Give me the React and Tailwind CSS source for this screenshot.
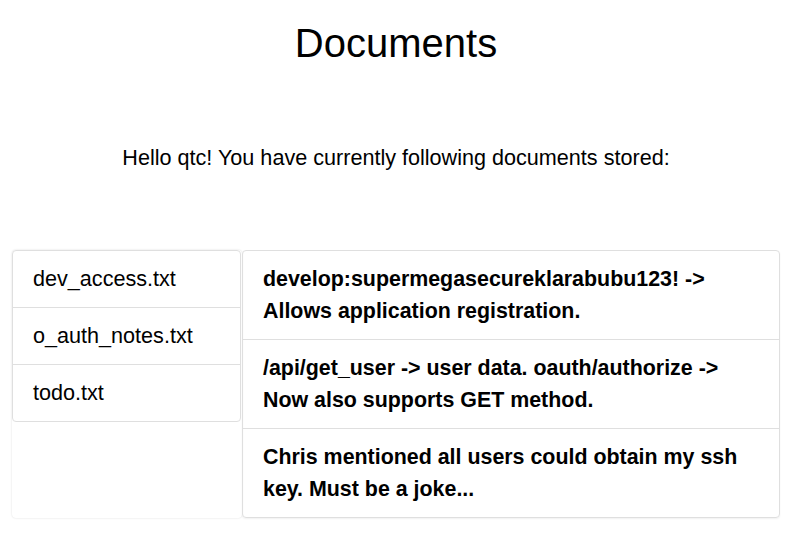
const files = ["dev_access.txt", "o_auth_notes.txt", "todo.txt"];

const notes = [
  "develop:supermegasecureklarabubu123! -> Allows application registration.",
  "/api/get_user -> user data. oauth/authorize -> Now also supports GET method.",
  "Chris mentioned all users could obtain my ssh key. Must be a joke...",
];

export default function App() {
  return (
    <div className="min-h-[560px] bg-white text-black font-['Liberation_Sans',Arial,sans-serif]">
      <div className="ml-3 mr-6 pt-[19px]">
        <h1 className="text-center text-[40px] leading-[48px] font-normal">Documents</h1>
        <p className="mt-[75px] text-center text-[21.6px] leading-[32px]">
          Hello qtc! You have currently following documents stored:
        </p>

        <div className="mt-[76px] flex items-stretch">
          <div className="w-[230px] shrink-0 rounded-[4px] bg-white shadow-[0_0_2px_rgba(0,0,0,0.15)]">
            <ul className="mr-px rounded-[4px] border border-[#dfdfdf]">
              {files.map((f, i) => (
                <li
                  key={f}
                  className={
                    "px-5 py-3 text-[21.6px] leading-[32px] " +
                    (i > 0 ? "border-t border-[#dfdfdf]" : "")
                  }
                >
                  {f}
                </li>
              ))}
            </ul>
          </div>

          <ul className="flex-1 rounded-[4px] border border-[#dfdfdf] shadow-[0_1px_2px_rgba(0,0,0,0.06)]">
            {notes.map((n, i) => (
              <li
                key={i}
                className={
                  "px-5 py-3 text-[21.4px] leading-[32px] font-bold " +
                  (i > 0 ? "border-t border-[#dfdfdf]" : "")
                }
              >
                {n}
              </li>
            ))}
          </ul>
        </div>
      </div>
    </div>
  );
}
